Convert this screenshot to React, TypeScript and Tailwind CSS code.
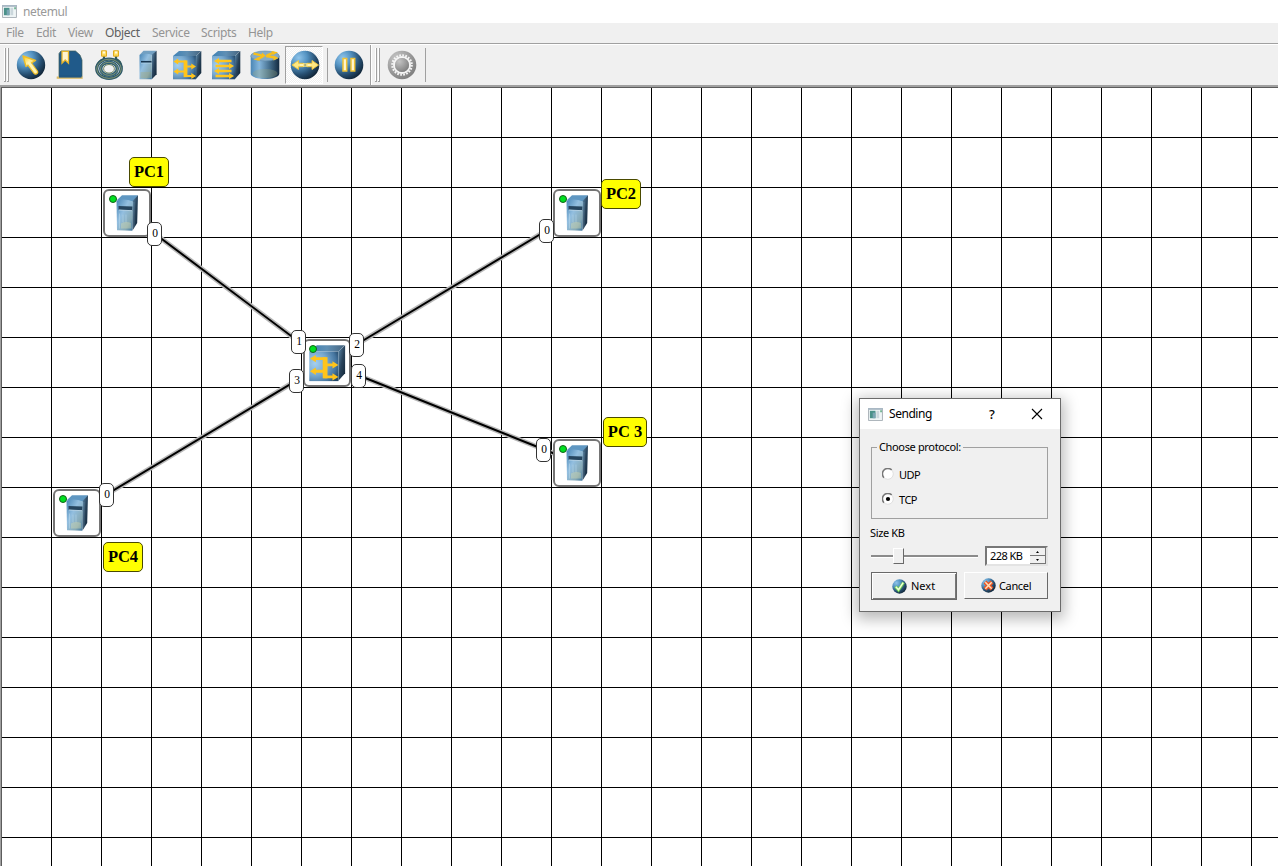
import React from "react";

type Point = { x: number; y: number };

const Defs = () => (
  <svg className="absolute h-0 w-0" aria-hidden="true">
    <defs>
      <radialGradient id="ball" cx="0.28" cy="0.25" r="0.85">
        <stop offset="0" stopColor="#8fc4ea" />
        <stop offset="0.35" stopColor="#5493c2" />
        <stop offset="0.7" stopColor="#264e70" />
        <stop offset="1" stopColor="#0e2030" />
      </radialGradient>
      <radialGradient id="greyBall" cx="0.3" cy="0.25" r="0.85">
        <stop offset="0" stopColor="#c4c4c4" />
        <stop offset="0.6" stopColor="#999" />
        <stop offset="1" stopColor="#7c7c7c" />
      </radialGradient>
      <radialGradient id="face" cx="0.2" cy="0.4" r="0.9">
        <stop offset="0" stopColor="#a3cff0" />
        <stop offset="0.45" stopColor="#78a9cf" />
        <stop offset="0.8" stopColor="#4676a0" />
        <stop offset="1" stopColor="#234766" />
      </radialGradient>
      <linearGradient id="topFace" x1="0" y1="0" x2="1" y2="0">
        <stop offset="0" stopColor="#3f82b5" />
        <stop offset="0.5" stopColor="#5f8fb4" />
        <stop offset="1" stopColor="#47657f" />
      </linearGradient>
      <linearGradient id="sideFace" x1="0" y1="0" x2="1" y2="1">
        <stop offset="0" stopColor="#5f8cae" />
        <stop offset="0.5" stopColor="#28435b" />
        <stop offset="1" stopColor="#0f2233" />
      </linearGradient>
      <linearGradient id="serverFace" x1="0" y1="0" x2="1" y2="1">
        <stop offset="0" stopColor="#4785b5" />
        <stop offset="0.4" stopColor="#93bfe0" />
        <stop offset="0.75" stopColor="#86a9b5" />
        <stop offset="1" stopColor="#33709f" />
      </linearGradient>
      <linearGradient id="drum" x1="0" y1="0" x2="1" y2="0">
        <stop offset="0" stopColor="#4a86b5" />
        <stop offset="0.3" stopColor="#85b6dc" />
        <stop offset="0.65" stopColor="#46708f" />
        <stop offset="1" stopColor="#132a40" />
      </linearGradient>
      <linearGradient id="gold" x1="0" y1="0" x2="1" y2="1">
        <stop offset="0" stopColor="#ffc400" />
        <stop offset="0.5" stopColor="#fff0a0" />
        <stop offset="1" stopColor="#f3bd20" />
      </linearGradient>
    </defs>
  </svg>
);

const PointerIcon = () => (
  <svg width="30" height="30" viewBox="0 0 30 30">
    <circle cx="15" cy="15" r="14.2" fill="url(#ball)" />
    <path d="M14 14.500 19.500 22" stroke="#edbd2a" strokeWidth="5.400" strokeLinecap="round" />
    <path d="M7 6 19.500 10.500 10 16.500z" fill="url(#gold)" stroke="#edbd2a" strokeWidth="1.400" strokeLinejoin="round" />
    <path d="M13.200 13.200 19.500 21.800" stroke="#fff3b4" strokeWidth="3" strokeLinecap="round" />
  </svg>
);

const BookIcon = () => (
  <svg width="30" height="30" viewBox="0 0 30 30">
    <path d="M4 3.500 6 1h14.500l4.500 4 2 5v17H4z" fill="#205a8a" stroke="#3e5d57" strokeWidth="0.7" />
    <path d="M1.700 26.500h26v2.300h-26z" fill="#d9ba65" />
    <path d="M4 25.200h22.500v2.400H4z" fill="#205783" />
    <path d="M7 1.400h6.500v11.800L10.200 10 7 13.200z" fill="#fff4cf" stroke="#e9b62a" strokeWidth="1.300" />
  </svg>
);

const CableIcon = () => (
  <svg width="30" height="30" viewBox="0 0 30 30" fill="none">
    <path d="M10 5.500v3.500Q4 11 2.500 17M22 5.500v3.500q5 2 5.500 8" stroke="#315a59" strokeWidth="2.200" />
    <ellipse cx="15" cy="18.800" rx="12.300" ry="9.600" stroke="#2f5a6a" strokeWidth="3.200" />
    <ellipse cx="15" cy="18.800" rx="12.300" ry="9.600" stroke="#a5ab74" strokeWidth="0.700" />
    <ellipse cx="15" cy="18.800" rx="8.300" ry="6.400" stroke="#2f5f75" strokeWidth="3.400" />
    <ellipse cx="15" cy="18.800" rx="8.500" ry="6.500" stroke="#a5ab74" strokeWidth="0.700" />
    <ellipse cx="15" cy="18.800" rx="5.400" ry="4.300" stroke="#6e8360" strokeWidth="1" />
    <path d="M7.500.800h5v5.400h-5zM19.500.800h5v5.400h-5z" fill="#ffdc5a" stroke="#dfac20" strokeWidth="1" />
    <path d="M8.800 1.400h2.300v2H8.800zM21 1.400h2.300v2H21z" fill="#fff9dc" />
  </svg>
);

const ServerIcon = () => (
  <svg width="30" height="30" viewBox="0 0 30 30">
    <path d="M6.500 5 10.500.8h13L19.800 5z" fill="#72a0c2" />
    <path d="M18.800 4.800 23.600.8v23.500l-4.800 4.900z" fill="url(#sideFace)" />
    <path d="M6.500 5Q13 2.500 18.800 4.800v24.400H6.500z" fill="url(#serverFace)" />
    <path d="M7.500 22h11v6h-11z" fill="#a5ad7d" opacity="0.35" />
    <path d="M8 11.800h10.500" stroke="#173650" strokeWidth="1.700" />
    <path d="M8 13.200h10.500" stroke="#a9cbe2" strokeWidth="0.800" />
  </svg>
);

const TowerIcon = () => (
  <svg width="24" height="38" viewBox="0 0 24 38">
    <path d="M2 6 7 1.200h16L18 7.500z" fill="#5f97c2" />
    <path d="M17 7.500 23 1.200 22.200 29l-4.700 7.500z" fill="url(#sideFace)" />
    <path d="M1.500 6.500Q10 4 18 7.500l-.7 29.300-15.300-.6z" fill="url(#serverFace)" />
    <path d="M3.500 12 17.500 12.500l-.3 4-13.700-.8z" fill="#26455f" />
    <path d="M4 16 17 16.700" stroke="#b9d5e7" strokeWidth="0.900" />
    <path d="M4.500 19.500v15M8 20.500v8M11 20.500v8" stroke="#bfdcee" strokeWidth="0.700" opacity="0.700" />
    <path d="M6 29.500Q11 27 16 29l.5 5.500H6z" fill="#d6dcae" opacity="0.400" />
    <path d="M18.900 8v26" stroke="#8fb5d0" strokeWidth="0.600" opacity="0.600" />
  </svg>
);

const SwitchIcon = ({ size = 30 }: { size?: number }) => (
  <svg width={size} height={size} viewBox="0 0 30 30">
    <path d="M1 6 7 1h22l-5 5z" fill="url(#topFace)" />
    <path d="M24 6 29.300 1v22L24 29z" fill="url(#sideFace)" />
    <path d="M1 6h23v23.300H1z" fill="url(#face)" />
    <path d="M24 6v23" stroke="#8db6d2" strokeWidth="0.400" opacity="0.600" />
    <path d="M5 11.500h9M5 21.500h9M13 16.500h7M13 26h7" stroke="#ffc41b" strokeWidth="2.200" />
    <path d="M13.500 10.400v16.700" stroke="#ffc41b" strokeWidth="3.800" />
    <path d="m1.500 11.500 4.700-2.900v5.800zM1.500 21.500l4.700-2.900v5.800zM24 16.500l-4.700-2.900v5.800zM24 26l-4.700-2.900v5.800z" fill="#ffc41b" />
  </svg>
);

const HubIcon = () => (
  <svg width="30" height="30" viewBox="0 0 30 30">
    <path d="M1 6 7 1h22l-5 5z" fill="url(#topFace)" />
    <path d="M24 6 29.300 1v22L24 29z" fill="url(#sideFace)" />
    <path d="M1 6h23v23.300H1z" fill="url(#face)" />
    <path d="M6 11h14.500M4.500 16H19M6 21h14.500M4.500 26H19" stroke="#ffc61d" strokeWidth="2.600" />
    <path d="m3 11 5-3v6zM23 16l-5-3v6zM3 21l5-3v6zM23 26l-5-3v6z" fill="#ffc61d" />
  </svg>
);

const RouterIcon = () => (
  <svg width="30" height="30" viewBox="0 0 30 30">
    <path d="M.7 6v17.500C.7 30.800 29.300 30.800 29.300 23.500V6z" fill="url(#drum)" />
    <ellipse cx="15" cy="23.500" rx="12.500" ry="4.500" fill="#9ca77b" opacity="0.300" />
    <ellipse cx="15" cy="6" rx="14.300" ry="5" fill="#86abc5" stroke="#618daf" strokeWidth="0.600" />
    <path d="m3.500 3.500 9.500 2.300M17 5.300l7-2.800M13 6.500 7 9.300M16 6l9 1.500" stroke="#f7bf1c" strokeWidth="2.400" />
    <path d="m11 8 5-2-4-3.500zM28 2.300l-6.500-1.300 1.500 4zM3.500 9.700l6.500 1L8.500 7zM28.500 8l-5-2.500v5z" fill="#f7bf1c" />
  </svg>
);

const SendIcon = () => (
  <svg width="30" height="30" viewBox="0 0 30 30">
    <circle cx="15" cy="15" r="14.300" fill="url(#ball)" />
    <path d="M2 15 8.500 10.500v2.800h5v3.400h-5v2.800zM28.500 15 22 10.500v2.800h-5v3.400h5v2.800z" fill="#ffe883" stroke="#eec43b" strokeWidth="0.900" />
    <path d="M13 13.300h4.500v3.400H13z" fill="#ffe883" />
    <path d="M14.200 14.300h2v1.400h-2z" fill="#8d9a72" />
    <path d="M10 14.200h3v1.600h-3zM17.500 14.200h3v1.600h-3z" fill="#fff6c4" />
  </svg>
);

const PauseIcon = () => (
  <svg width="30" height="30" viewBox="0 0 30 30">
    <circle cx="15" cy="15" r="14.300" fill="url(#ball)" />
    <path d="M9 8.500h3.700v12.500H9zM17 8.500h3.700v12.500H17z" fill="#fff6cf" stroke="#f0c236" strokeWidth="1.500" />
  </svg>
);

const GearIcon = () => (
  <svg width="30" height="30" viewBox="0 0 30 30">
    <circle cx="15" cy="15" r="14.300" fill="url(#greyBall)" />
    <circle cx="15" cy="15" r="9.700" fill="none" stroke="#f5f5f5" strokeWidth="2.200" strokeDasharray="1.700 1.347" />
    <circle cx="15" cy="15" r="8" fill="none" stroke="#f5f5f5" strokeWidth="2" />
    <circle cx="15" cy="15" r="7" fill="url(#greyBall)" />
  </svg>
);

const AppIcon = () => (
  <svg width="15" height="13" viewBox="0 0 16 14">
    <path d="M.5.500h15v13H.5z" fill="#eff5f6" stroke="#a5adb4" />
    <path d="M0 0h16v2H0z" fill="#a9b8c4" />
    <path d="M2 3h6v8H2z" fill="#4a9189" />
    <path d="M5 5h3v6H5z" fill="#7aa5b3" />
    <path d="M9 3h3v8H9z" fill="#cbd7dc" />
    <path d="M13 2.500h2v2h-2z" fill="#75b594" />
  </svg>
);

const Separator = () => <span className="h-[34px] w-px shrink-0 bg-[#a0a0a0]" />;

const Handle = () => (
  <span className="flex h-[34px] w-[5px] shrink-0 justify-between">
    <span className="w-[2px] border-b border-r border-[#a0a0a0] bg-white" />
    <span className="w-[2px] border-b border-r border-[#a0a0a0] bg-white" />
  </span>
);

const tools = [PointerIcon, BookIcon, CableIcon, ServerIcon, SwitchIcon, HubIcon, RouterIcon];

const menu = [
  { name: "File", style: "w-[30px] text-[#949494]" },
  { name: "Edit", style: "w-[32px] text-[#949494]" },
  { name: "View", style: "w-[37px] text-[#949494]" },
  { name: "Object", style: "w-[47px] text-[#5f5f5f]" },
  { name: "Service", style: "w-[49px] text-[#949494]" },
  { name: "Scripts", style: "w-[47px] text-[#949494]" },
  { name: "Help", style: "w-[30px] text-[#949494]" },
];

const Device = ({ x, y, kind = "pc" }: Point & { kind?: "pc" | "switch" }) => (
  <div
    className="absolute flex h-12 w-12 items-center justify-center rounded-[6px] border-2 border-[#757575] bg-white"
    style={{ left: x, top: y }}
  >
    {kind === "pc" ? <TowerIcon /> : <SwitchIcon size={38} />}
    <span className="absolute left-[4px] top-[4px] h-[8px] w-[8px] rounded-full border border-[#126018] bg-[#00e020]" />
  </div>
);

const Port = ({ x, y, n }: Point & { n: string }) => (
  <div
    className="absolute flex h-6 w-[15px] items-center justify-center rounded-[5px] border border-[#333] bg-white pb-[1px] pl-[1px] font-['Liberation_Serif',serif] text-[11.5px] leading-none text-black"
    style={{ left: x, top: y }}
  >
    {n}
  </div>
);

const Tag = ({ x, y, w, text }: Point & { w: number; text: string }) => (
  <div
    className="absolute flex h-[30px] items-center justify-center whitespace-nowrap rounded-[5px] border border-[#4a4a00] bg-[#ffff00] font-['Liberation_Serif',serif] text-[16.5px] font-bold leading-none text-black"
    style={{ left: x, top: y, width: w }}
  >
    {text}
  </div>
);

const links = [
  { x: 125.5, y: 125.5 },
  { x: 575.5, y: 125.5 },
  { x: 75.5, y: 425.5 },
  { x: 575.5, y: 375.5 },
];

const Radio = ({ label, checked }: { label: string; checked?: boolean }) => (
  <div className="flex h-[25px] items-center">
    <svg width="12" height="12" viewBox="0 0 12 12">
      <circle cx="6" cy="6" r="5" fill="#fff" />
      <path d="M2 9.700A5.300 5.300 0 0 1 9.700 2" fill="none" stroke="#777" strokeWidth="1.500" />
      <path d="M2 9.700A5.300 5.300 0 0 0 9.700 2" fill="none" stroke="#e0e0e0" strokeWidth="1" />
      {checked && <circle cx="6" cy="6" r="2.100" fill="#000" />}
    </svg>
    <span className="ml-[5px] mt-[2px]">{label}</span>
  </div>
);

const Dialog = () => (
  <div className="absolute left-[858px] top-[311px] flex h-[214px] w-[202px] flex-col border border-[#6b6b6b] bg-[#f0f0f0] font-['Noto_Sans',sans-serif] text-[11px] leading-none text-black shadow-[0_4px_14px_3px_rgba(0,0,0,0.28)]">
    <div className="flex h-[30px] shrink-0 items-center bg-white pl-2">
      <AppIcon />
      <span className="ml-[6px] w-[100px] text-[12px] tracking-[-0.45px]">Sending</span>
      <span className="w-[42px] text-[13px] font-medium">?</span>
      <svg width="12" height="12" viewBox="0 0 12 12">
        <path d="m1 1 10 10M11 1 1 11" stroke="#000" strokeWidth="1.100" />
      </svg>
    </div>
    <fieldset className="ml-[11px] mt-[12px] h-[78px] w-[177px] shrink-0 border border-[#a0a0a0] pl-[10px]">
      <legend className="-ml-[5px] h-[12px] px-[2px] tracking-[-0.35px]">Choose protocol:</legend>
      <div className="pt-[8px] tracking-[-0.5px]">
        <Radio label="UDP" />
        <Radio label="TCP" checked />
      </div>
    </fieldset>
    <span className="ml-[10px] mt-[8px] h-[12px] tracking-[-0.35px]">Size KB</span>
    <div className="ml-[11px] mt-[7px] flex h-[20px] w-[177px] items-center justify-between">
      <div className="flex h-[20px] w-[107px] items-center">
        <span className="h-[3px] w-[22px] border-b border-white bg-[#8b8b8b]" />
        <span className="h-[16px] w-[11px] border border-b-[#696969] border-l-white border-r-[#696969] border-t-white bg-[#f0f0f0]" />
        <span className="h-[3px] flex-1 border-b border-white bg-[#8b8b8b]" />
      </div>
      <div className="flex h-[20px] w-[63px] items-center border-2 border-b-[#e3e3e3] border-l-[#777] border-r-[#e3e3e3] border-t-[#777] bg-white">
        <span className="w-[43px] whitespace-nowrap pb-[2px] pl-[3px] tracking-[-0.55px]">228 KB</span>
        <span className="flex h-full w-[16px] flex-col">
          <span className="flex flex-1 items-center justify-center border-b border-r border-[#777] bg-[#f0f0f0]">
            <svg width="3" height="2"><path d="M0 2 1.500 0 3 2z" /></svg>
          </span>
          <span className="flex flex-1 items-center justify-center border-b border-r border-[#777] bg-[#f0f0f0]">
            <svg width="3" height="2"><path d="M0 0h3L1.500 2z" /></svg>
          </span>
        </span>
      </div>
    </div>
    <div className="ml-[11px] mt-[6px] flex w-[177px] justify-between">
      <button className="flex h-[28px] w-[86px] items-center border border-[#696969] pl-[20px] shadow-[inset_1px_1px_0_#fff,inset_-1px_-1px_0_#777]">
        <svg width="15" height="15" viewBox="0 0 15 15">
          <circle cx="7.500" cy="7.500" r="7.200" fill="url(#ball)" />
          <path d="m3.500 7.500 3 3.500 5-7.500" fill="none" stroke="#70d849" strokeWidth="3" />
          <path d="m3.800 7.800 2.700 2.900 4.700-7" fill="none" stroke="#effbdc" strokeWidth="1.500" />
        </svg>
        <span className="ml-[4px] pb-[1px]">Next</span>
      </button>
      <button className="flex h-[27px] w-[84px] items-center border border-b-[#696969] border-l-white border-r-[#696969] border-t-white pl-[16px]">
        <svg width="15" height="15" viewBox="0 0 15 15">
          <circle cx="7.500" cy="7.500" r="7.200" fill="url(#ball)" />
          <path d="m4 4 7 7M11 4l-7 7" stroke="#ed5421" strokeWidth="4" />
          <path d="m4.300 4.300 6.400 6.400M10.700 4.300l-6.400 6.400" stroke="#ffdfb9" strokeWidth="1.500" />
        </svg>
        <span className="ml-[3px] tracking-[-0.35px]">Cancel</span>
      </button>
    </div>
  </div>
);

export default function App() {
  return (
    <div className="flex h-[866px] w-[1278px] flex-col overflow-hidden bg-[#f0f0f0]">
      <Defs />
      <header className="flex h-[23px] shrink-0 items-center bg-white pl-[2px] font-['Noto_Sans',sans-serif] text-[12px] leading-none text-[#999]">
        <AppIcon />
        <span className="ml-[6px] tracking-[-0.4px]">netemul</span>
      </header>
      <nav className="flex h-[21px] shrink-0 items-center border-b border-[#a0a0a0] pl-[6px] font-['Noto_Sans',sans-serif] text-[12px] leading-none tracking-[-0.35px]">
        {menu.map((m) => (
          <span key={m.name} className={m.style}>{m.name}</span>
        ))}
      </nav>
      <div className="flex h-[41px] shrink-0 items-center border-t border-white pl-[4px]">
        <Handle />
        <div className="ml-[2px] flex">
          {tools.map((Icon, i) => (
            <span key={i} className="flex h-[38px] w-[39px] items-center justify-center"><Icon /></span>
          ))}
        </div>
        <span className="ml-px flex h-[38px] w-[38px] items-center justify-center border border-b-white border-l-[#a0a0a0] border-r-white border-t-[#a0a0a0] bg-[#f0f0f0] bg-[conic-gradient(#fff_25%,transparent_0_50%,#fff_0_75%,transparent_0)] bg-[size:2px_2px] pl-[1px]">
          <SendIcon />
        </span>
        <span className="ml-[4px] flex"><Separator /></span>
        <span className="ml-[6px]"><PauseIcon /></span>
        <span className="ml-[6px] h-[40px] w-[2px] border-r border-white bg-[#a0a0a0]" />
        <span className="ml-[3px] flex"><Handle /></span>
        <span className="ml-[7px]"><GearIcon /></span>
        <span className="ml-[8px] flex"><Separator /></span>
      </div>
      <main className="relative flex-1 overflow-hidden border-l border-t-2 border-[#a0a0a0] bg-white bg-[linear-gradient(to_right,#000_1px,transparent_1px),linear-gradient(to_bottom,#000_1px,transparent_1px)] bg-[size:50px_50px]">
        <div className="absolute inset-0 border-l border-t border-[#5c5c5c]" />
        <svg className="absolute left-0 top-0" width="1277" height="779">
          {links.map((p, i) => (
            <g key={i}>
              <line x1={p.x} y1={p.y} x2="325.500" y2="275.500" stroke="#b8b8b8" strokeWidth="5" />
              <line x1={p.x} y1={p.y} x2="325.500" y2="275.500" stroke="#000" strokeWidth="2" />
            </g>
          ))}
        </svg>
        <Device x={102} y={102} />
        <Device x={552} y={102} />
        <Device x={552} y={352} />
        <Device x={52} y={402} />
        <Device x={302} y={252} kind="switch" />
        <Port x={146} y={135} n="0" />
        <Port x={290} y={243} n="1" />
        <Port x={348} y={246} n="2" />
        <Port x={288} y={282} n="3" />
        <Port x={350} y={277} n="4" />
        <Port x={538} y={132} n="0" />
        <Port x={535} y={351} n="0" />
        <Port x={98} y={396} n="0" />
        <Tag x={128} y={70} w={40} text="PC1" />
        <Tag x={600} y={92} w={40} text="PC2" />
        <Tag x={602} y={330} w={44} text="PC 3" />
        <Tag x={102} y={455} w={40} text="PC4" />
        <Dialog />
      </main>
    </div>
  );
}
